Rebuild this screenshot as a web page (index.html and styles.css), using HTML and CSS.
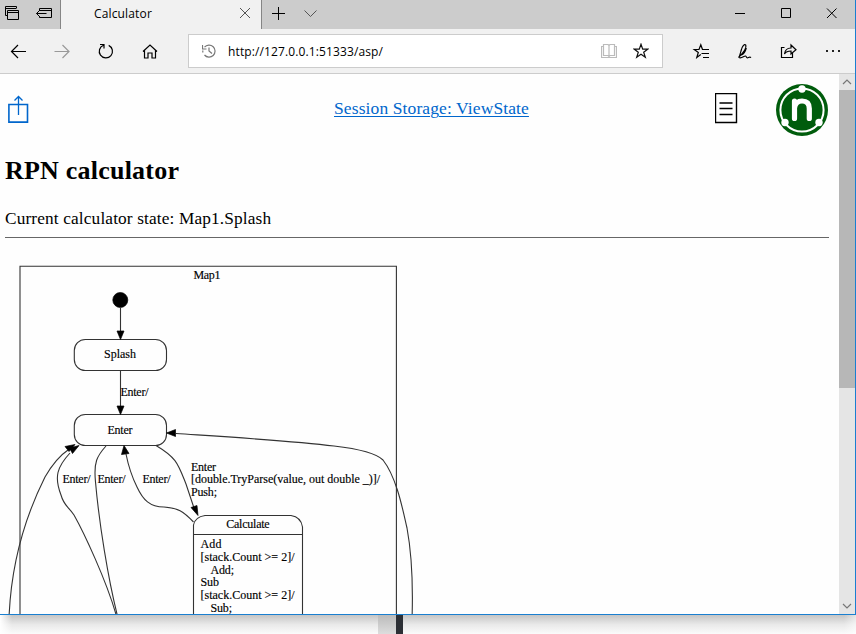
FILE: index.html
```html
<!DOCTYPE html>
<html lang="en">
<head>
<meta charset="utf-8">
<title>Calculator</title>
<link rel="stylesheet" href="styles.css">
</head>
<body>
<div class="browser">
  <header class="titlebar">
    <div class="tab-tools">
      <svg width="60" height="29" viewBox="0 0 60 29"><path d="M7.500 15.500h-2v-9h11v2M5 8.500h11M7.500 10.500h11v9h-11zM7.500 12.500h11M39.500 11v-2.500h12v9h-12V16M40 10.500h12M36.500 13.500h10M39 11l-2.500 2.500 2.500 2.500"/></svg>
    </div>
    <div class="tab"><span>Calculator</span>
      <svg width="12" height="12" viewBox="0 0 12 12"><path d="M1 1l10 10M11 1L1 11"/></svg>
    </div>
    <div class="tab-actions">
      <svg width="60" height="29" viewBox="0 0 60 29"><path d="M10 13.500h13M16.500 7v13"/><path class="gray" d="M42.500 10.500l6 6 6-6"/></svg>
    </div>
    <div class="window-controls">
      <svg width="130" height="29" viewBox="0 0 130 29"><path d="M10 13.500h10M56.500 8.500h9v9h-9zM102 8.500l9.500 9.500M111.500 8.500L102 18"/></svg>
    </div>
  </header>
  <nav class="toolbar">
    <svg class="nav-icons" width="188" height="44" viewBox="0 0 188 44">
      <path d="M11.500 22.500H26M18 16l-6.500 6.500L18 29"/>
      <path class="disabled" d="M54.500 22.500H69M62.500 16l6.500 6.500-6.500 6.500"/>
      <path d="M103.500 16.200a6.600 6.600 0 1 0 5.200.2M100 15.500h4v4"/>
      <path d="M143 22.500l7-6.500 7 6.500M144.500 21.500v7.500h3.500v-5h4v5h3.500v-7.500"/>
    </svg>
    <div class="address">
      <svg width="14" height="14" viewBox="0 0 14 14"><path d="M2.500 3.200A6 6 0 1 1 2.500 11M.5 1v4h4M.8 6.500v2M7 3.500V7l3 2.500"/></svg>
      <span class="url">http://127.0.0.1:51333/asp/</span>
      <svg class="book" width="16" height="16" viewBox="0 0 16 16"><path d="M2.500 1.500h4.500l1 1 1-1h4.500v11H9l-1 1-1-1H2.500zM8 2.500v11M2 3.500H.5v11h15v-11H14"/></svg>
      <svg class="star" width="16" height="16" viewBox="0 0 16 16"><path d="M8 1.200l1.700 4.900h5.200l-4.200 3.200 1.600 5L8 11.300l-4.300 3 1.600-5L1.100 6.100h5.200z"/></svg>
    </div>
    <svg class="actions" width="192" height="44" viewBox="0 0 192 44">
      <path d="M39.500 20.500L37.800 15.800 36 20.500H31.300l4 3-1.500 5 4-3M39 20.500h7M38.500 24.500H46M40 28.500h6"/>
      <path d="M75.500 28.500c3-3 8.500-9 7.300-12.300-1.400-2-3.800 1.500-4.500 4.800-1 3.500-2 7.500-2.800 7.500m3-2.500c2-1 4-4 4.800-7m-7 9.700c3 .8 4.500-2 6.300-1.700 1 .3.500 2 2 1.800 1.500-.5 2-1 3.500-.3"/>
      <path d="M118.500 18v10.500h11V24M121.500 25c.5-4 3-6 6.500-6v-3l5 4.800-5 4.200v-3c-3 0-5 .5-6.500 3zM118.500 18.500h3"/>
      <path class="dots" d="M163 21h2v2h-2zM169 21h2v2h-2zM175 21h2v2h-2z"/>
    </svg>
  </nav>
  <div class="viewport">
    <main class="page">
      <div class="page-head">
        <svg class="share" width="22" height="30" viewBox="0 0 22 30"><path d="M.9 9.500h18.600v17.600H.9z" stroke-width="1.600"/><path d="M10.500 20V1.500M6.500 5.500l4-4 4 4" stroke-width="1.300"/></svg>
        <a class="session" href="#">Session Storage: ViewState</a>
        <svg class="menu" width="23" height="31" viewBox="0 0 23 31"><path d="M.5.500h21v29H.5zM4.500 10h13M4.500 15.500h13M4.500 21.500h13"/></svg>
        <svg class="logo" width="54" height="54" viewBox="0 0 54 54">
          <circle cx="27" cy="27" r="26" fill="#005c0c"/>
          <circle cx="27" cy="27" r="21.600" fill="none" stroke="#fff" stroke-width="2"/>
          <g fill="#fff"><circle cx="27" cy="6" r="3.700"/><circle cx="10" cy="39.500" r="3.700"/><circle cx="44" cy="39.500" r="3.700"/></g>
          <path d="M19.500 18v17.500M19.500 25c.5-4.500 3.500-7 7.500-7 5 0 7.300 2.500 7.300 7.500v10" fill="none" stroke="#fff" stroke-width="5.200" stroke-linecap="round"/>
        </svg>
      </div>
      <h1>RPN calculator</h1>
      <p>Current calculator state: Map1.Splash</p>
      <hr>
      <svg class="diagram" width="430" height="364" viewBox="0 250 430 364">
        <g class="lines">
          <path d="M20 620V266.300H396.400V620"/>
          <circle class="solid" cx="120.300" cy="300" r="7.500"/>
          <path d="M120.500 308v24M120.500 371v36"/>
          <rect x="74.300" y="339.500" width="92.200" height="31" rx="11"/>
          <rect x="74.300" y="414.500" width="92.200" height="31" rx="11"/>
          <path d="M9 618C11 565 24 519 45 477Q56 458 68 450"/>
          <path d="M117 618C107 581 83 531 74 515C68 506 64 506 61 495C54 477 57 467 70 453"/>
          <path d="M118 618C108 579 99 522 95.500 482C93.500 462 97 456 106 446"/>
          <path d="M193.500 522C183 511 178 508 164 507C150 507 143 500 137 487C131 475 128 464 126 454"/>
          <path d="M156 445.500C177 458 178 464 186 484L194 508"/>
          <path d="M176 433.500C244 438 294 441 334 446C360 449 376 453 383 460C397 478 403 511 407 528C412 555 413 590 412 620"/>
          <path d="M193.500 620V525Q195 517 205 515.500H291Q301 517 302.500 527V620M193.500 534.500H302.500"/>
          <g class="solid"><path d="M117 331h7l-3.500 8.500zM117 406h7l-3.500 8.500zM166.500 433l9-3.500v7zM121.500 454.500l2.500-9 5 8zM191 507.500l6-2 1 10zM75 444.500l-6 7-4-5zM79 445.500l-6.500 8-3-5.500z"/></g>
        </g>
        <g class="labels">
          <text x="193.500" y="279" textLength="27">Map1</text>
          <text x="104" y="358" textLength="32">Splash</text>
          <text x="120.500" y="395.500" textLength="28">Enter/</text>
          <text x="107.500" y="433.500" textLength="25">Enter</text>
          <text x="62.500" y="483" textLength="28">Enter/</text>
          <text x="97.500" y="483" textLength="28">Enter/</text>
          <text x="142.500" y="483" textLength="28">Enter/</text>
          <text x="191" y="471" textLength="25">Enter</text>
          <text x="191" y="483" textLength="189">[double.TryParse(value, out double _)]/</text>
          <text x="191" y="496" textLength="26">Push;</text>
          <text x="226.200" y="528" textLength="43.500">Calculate</text>
          <text x="200.500" y="548" textLength="21">Add</text>
          <text x="200.500" y="561" textLength="94">[stack.Count &gt;= 2]/</text>
          <text x="210.500" y="573.500" textLength="23.500">Add;</text>
          <text x="200.500" y="586" textLength="18.500">Sub</text>
          <text x="200.500" y="599" textLength="94">[stack.Count &gt;= 2]/</text>
          <text x="210.500" y="611.500" textLength="21.500">Sub;</text>
        </g>
      </svg>
    </main>
    <aside class="scrollbar">
      <svg width="16" height="16" viewBox="0 0 16 16"><path d="M4 10l4-4 4 4"/></svg>
      <div class="thumb"></div>
      <svg class="down" width="16" height="16" viewBox="0 0 16 16"><path d="M4 6l4 4 4-4"/></svg>
    </aside>
  </div>
</div>
<footer class="desktop"><div class="panel"></div><div class="post"></div></footer>
</body>
</html>
```
FILE: styles.css
```css
* { box-sizing: border-box; }
body { margin: 0; width: 856px; height: 634px; overflow: hidden; background: #fff; }
svg { display: block; flex: none; fill: none; stroke: #000; stroke-width: 1; }
.browser { height: 615px; display: flex; flex-direction: column; border-right: 1px solid #1a7fd0; border-bottom: 1px solid #1a7fd0; font-family: "Open Sans", "Noto Sans", sans-serif; }
.titlebar { height: 29px; flex: none; display: flex; background: #ccc; }
.tab-tools { width: 61px; border-right: 1px solid #858585; }
.tab { width: 201px; display: flex; align-items: center; justify-content: space-between; padding: 0 10px 3px 33px; background: #f1f1f1; border-right: 1px solid #858585; font-size: 12px; letter-spacing: .15px; }
.tab svg, .tab-actions .gray { stroke: #555; }
.window-controls { margin-left: auto; width: 130px; }
.toolbar { height: 45px; flex: none; display: flex; background: #f1f1f1; border-bottom: 1px solid #ccc; }
.toolbar svg { stroke-width: 1.2; }
.toolbar .disabled { stroke: #999; }
.address { width: 475px; height: 34px; margin-top: 5px; display: flex; align-items: center; padding: 0 13px; background: #fff; border: 1px solid #ccc; font-size: 12px; }
.address svg { stroke: #777; }
.url { margin-left: 12px; width: 373px; white-space: nowrap; letter-spacing: .12px; }
.address .book { stroke: #bbb; }
.address .star { stroke: #111; margin-left: 16px; }
.toolbar .dots { fill: #222; stroke: none; }
.viewport { flex: 1; min-height: 0; display: flex; }
.page { flex: 1; min-width: 0; overflow: hidden; background: #fefefe; font-family: "Liberation Serif", serif; }
.page-head { height: 70px; display: flex; align-items: flex-start; padding: 9px 10px 0 8px; }
.share { margin-top: 12px; stroke: #0066cc; }
.session { width: 195px; margin: 15px 0 0 304px; font-size: 17.500px; letter-spacing: .11px; line-height: 21px; color: #0066cc; white-space: nowrap; text-decoration-thickness: 1px; text-underline-offset: 2px; }
.menu { margin: 10px 0 0 186px; stroke-width: 1.400; }
.logo { margin-left: 37px; stroke: none; }
h1 { margin: 11px 0 0 5px; height: 32px; font-size: 26px; letter-spacing: .22px; line-height: 32px; }
p { margin: 20px 0 0 5px; height: 24px; font-size: 17.300px; letter-spacing: .14px; line-height: 24px; }
hr { margin: 6px 10px 0 5px; height: 1px; border: 0; background: #666; }
.diagram { margin-top: 12px; }
.lines { stroke: #333; stroke-width: 1.100; }
.solid { fill: #000; stroke: #000; stroke-width: .7; }
.labels { fill: #000; stroke: #000; stroke-width: .15px; font-family: "Liberation Serif", serif; font-size: 12px; }
.scrollbar { width: 16px; display: flex; flex-direction: column; background: #e5e5e5; }
.scrollbar svg { stroke: #777; stroke-width: 1.200; }
.thumb { height: 298px; background: #b7b7b7; }
.down { margin-top: auto; }
.desktop { height: 19px; display: flex; padding-left: 378px; background: linear-gradient(90deg, #fff, transparent 12px, transparent 844px, #fff8), linear-gradient(#c5c5c5, #e9e9e9 50%, #fbfbfb); }
.panel { width: 18px; background: linear-gradient(#bbb, #ddd); }
.post { width: 7px; background: #2c2f35; }
```
